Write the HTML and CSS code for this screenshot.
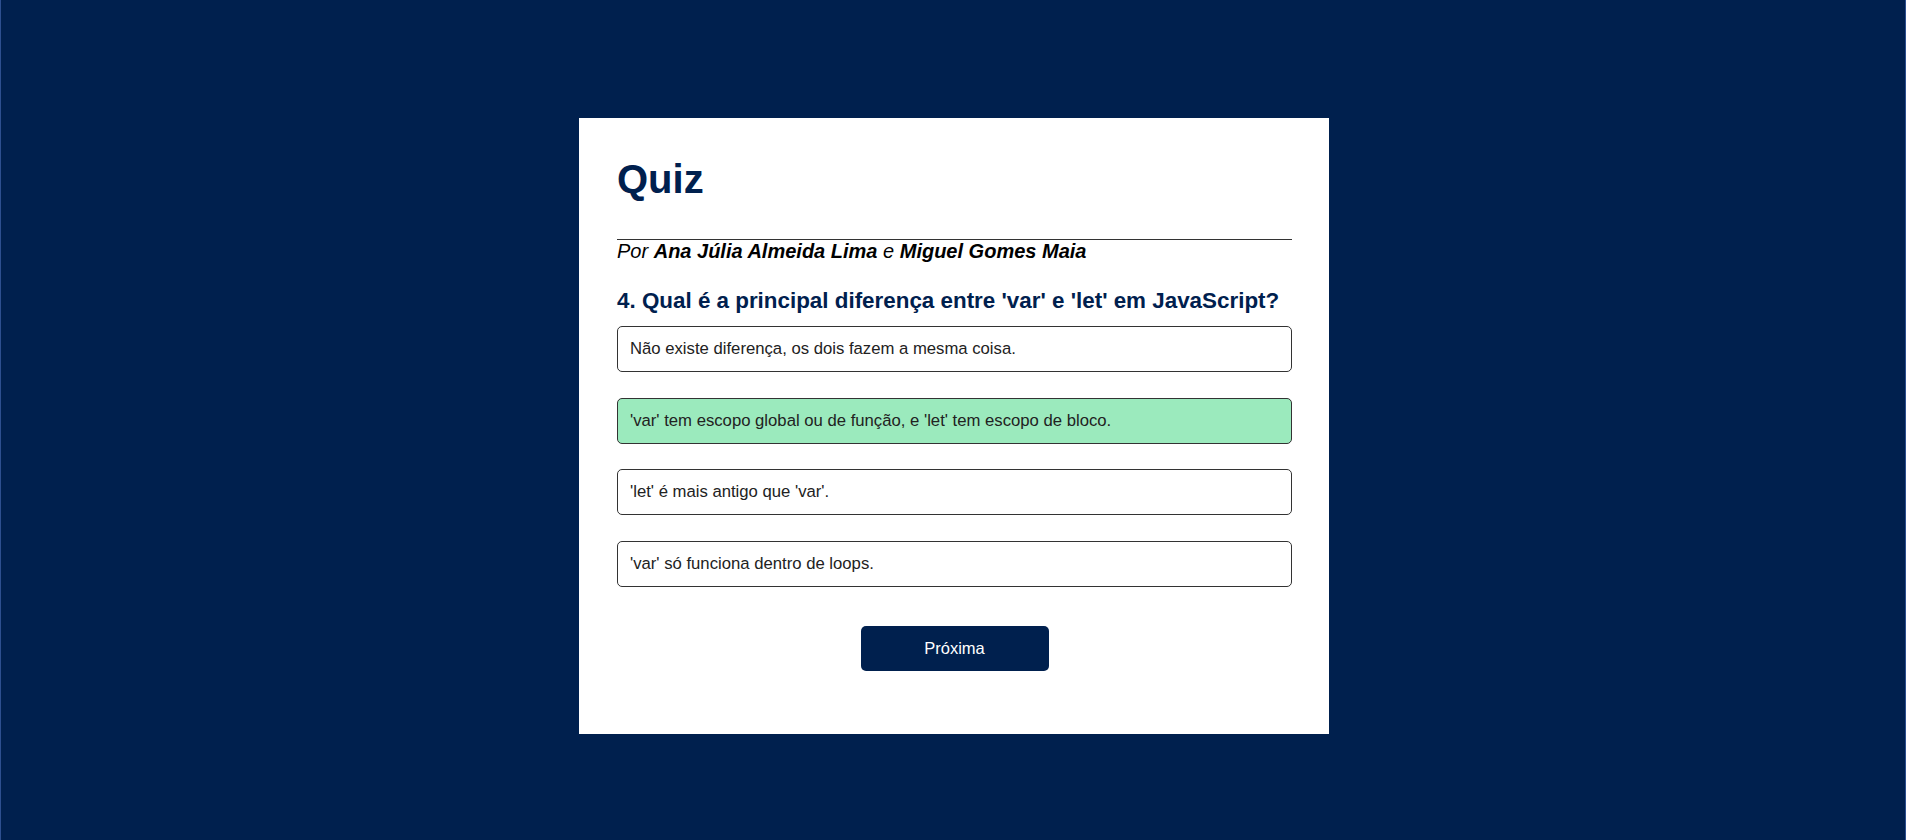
FILE: index.html
```html
<!DOCTYPE html>
<html lang="pt-BR">
<head>
<meta charset="utf-8">
<title>Quiz</title>
<link rel="stylesheet" href="styles.css">
</head>
<body>
<div class="page">
  <main class="card">
    <h1 class="title">Quiz</h1>
    <p class="byline">Por <strong>Ana Júlia Almeida Lima</strong> e <strong>Miguel Gomes Maia</strong></p>
    <h2 class="question">4. Qual é a principal diferença entre 'var' e 'let' em JavaScript?</h2>
    <div class="options">
      <div class="option">Não existe diferença, os dois fazem a mesma coisa.</div>
      <div class="option option-correct">'var' tem escopo global ou de função, e 'let' tem escopo de bloco.</div>
      <div class="option">'let' é mais antigo que 'var'.</div>
      <div class="option">'var' só funciona dentro de loops.</div>
    </div>
    <div class="actions">
      <button class="next-btn" type="button">Próxima</button>
    </div>
  </main>
</div>
</body>
</html>
```

FILE: styles.css
```css
html, body {
  margin: 0;
  padding: 0;
  height: 100%;
}

body {
  background: #00204e;
  font-family: "Liberation Sans", Arial, sans-serif;
}

.page {
  box-sizing: border-box;
  min-height: 100vh;
  border-left: 1px solid #2d4f8f;
  border-right: 1px solid #2d4f8f;
  padding: 118px 0 0 2px;
  display: flex;
  justify-content: center;
  align-items: flex-start;
}

.card {
  box-sizing: border-box;
  width: 750px;
  background: #ffffff;
  padding: 38px 37px 63px 38px;
  display: flex;
  flex-direction: column;
}

.title {
  margin: 0 0 37px 0;
  font-size: 40px;
  line-height: 46px;
  font-weight: bold;
  color: #00204e;
}

.byline {
  margin: 0;
  border-top: 1px solid #333333;
  font-size: 20px;
  line-height: 23px;
  font-style: italic;
  color: #000000;
}

.byline strong {
  font-weight: bold;
}

.question {
  margin: 24.5px 0 12.8px 0;
  font-size: 22.4px;
  line-height: 25.8px;
  font-weight: bold;
  color: #00204e;
}

.options {
  display: flex;
  flex-direction: column;
  gap: 25.67px;
}

.option {
  box-sizing: border-box;
  height: 46px;
  display: flex;
  align-items: center;
  padding: 0 12px;
  border: 1px solid #333333;
  border-radius: 5px;
  background: #ffffff;
  font-size: 16.7px;
  color: #222222;
}

.option-correct {
  background: #9beabd;
}

.actions {
  display: flex;
  justify-content: center;
  margin-top: 39px;
}

.next-btn {
  width: 188px;
  height: 45px;
  border: none;
  border-radius: 5px;
  background: #00204e;
  color: #ffffff;
  font-family: "Liberation Sans", Arial, sans-serif;
  font-size: 16.5px;
  cursor: pointer;
}
```
